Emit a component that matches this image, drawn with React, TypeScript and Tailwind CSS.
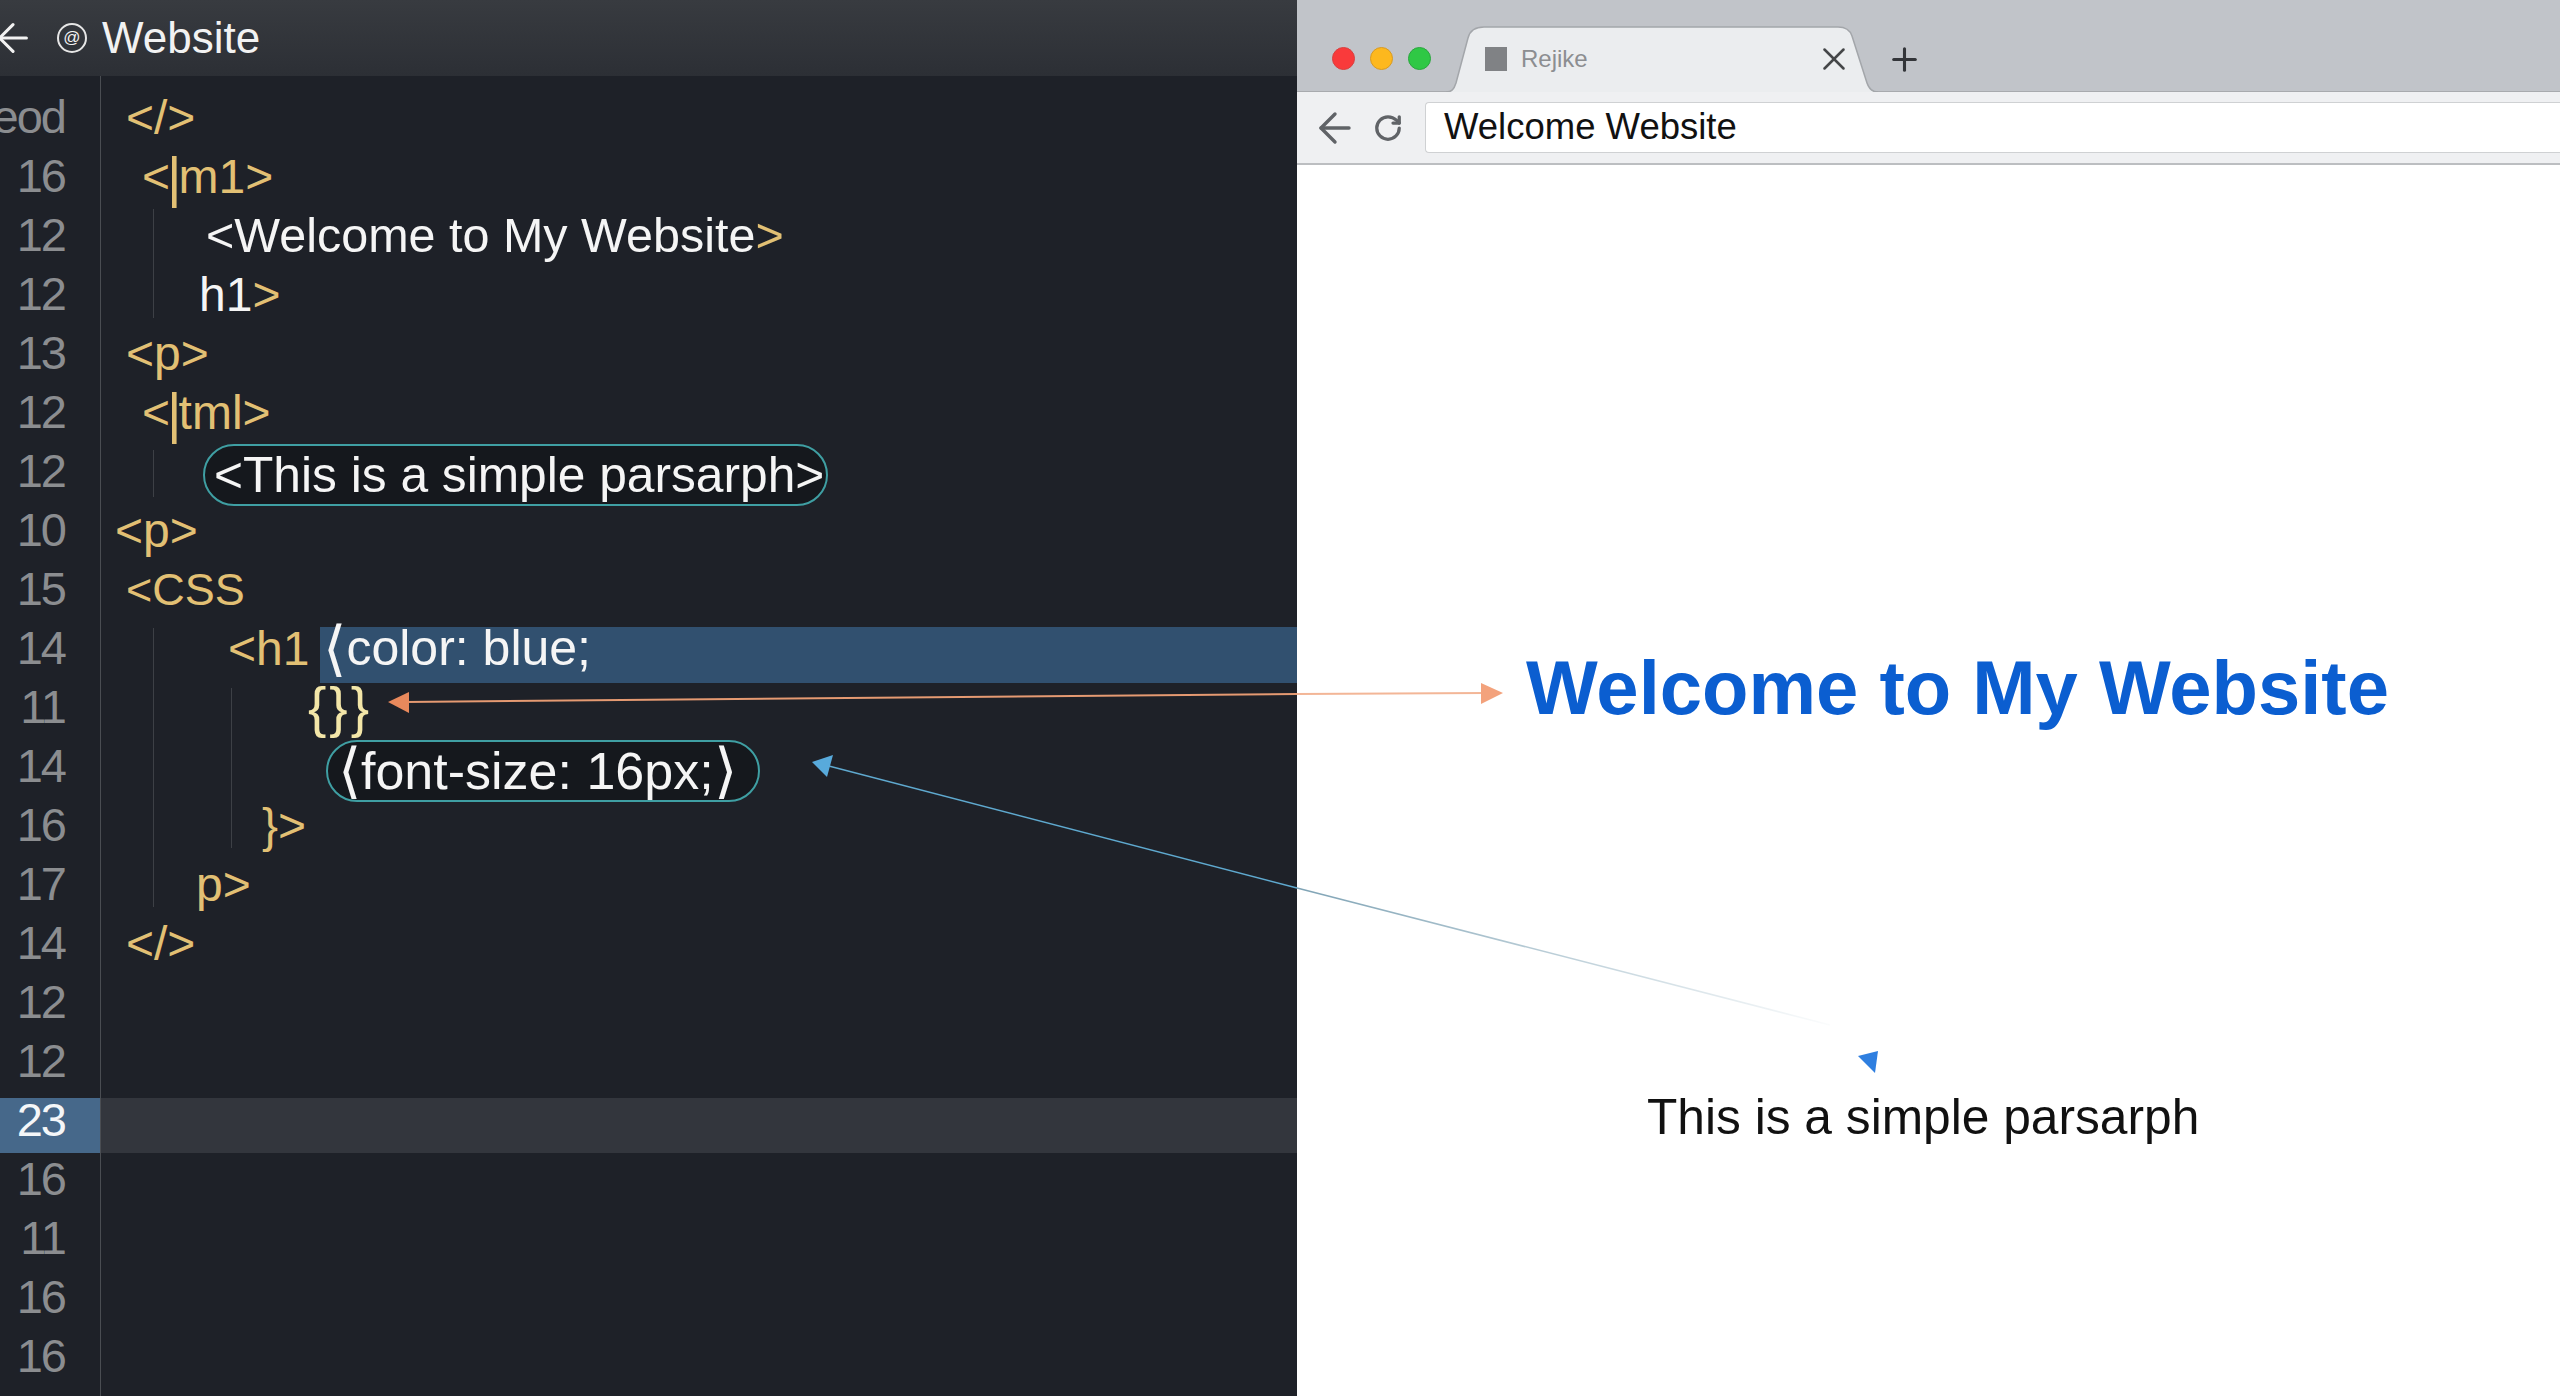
import { ArrowLeft, Plus, RotateCw, X } from 'lucide-react';
import type { ReactNode } from 'react';

const numbers = ['eod', '16', '12', '12', '13', '12', '12', '10', '15', '14', '11', '14', '16', '17', '14', '12', '12', '23', '16', '11', '16', '16'];

const Y = ({ children }: { children: ReactNode }) => <span className="text-[#e2c074]">{children}</span>;

const Pill = ({ className, children }: { className: string; children: ReactNode }) => (
  <div className={`flex h-[62px] items-center whitespace-nowrap rounded-full border-2 border-[#3f9fa3] bg-[#15181d] ${className}`}>{children}</div>
);

// tall bar / chevron glyphs the editor draws bigger than the text around them
const Bar = () => <span className="mx-[-3px] text-[56px] leading-none">|</span>;
const Tall = ({ children }: { children: ReactNode }) => <span className="text-[60px] leading-none">{children}</span>;

function Gutter() {
  return (
    <div className="w-[101px] shrink-0 border-r border-[#4a4d52] pt-[12px] text-[47px] tracking-[-2px] text-[#8b8d90]">
      {numbers.map((n, i) => (
        <div key={i} className="relative flex h-[59px] items-center justify-end whitespace-nowrap pr-[35px]">
          {n === '23' && <div className="absolute left-0 right-0 top-[7px] h-[55px] bg-[#46688a]" />}
          <span className={n === '23' ? 'relative text-[#f4f6f8]' : 'relative'}>{n}</span>
        </div>
      ))}
    </div>
  );
}

function Code() {
  return (
    <div className="relative flex-1 overflow-hidden pt-[12px] text-[48px] text-[#f5f5f5]">
      {/* indent guides */}
      <div className="absolute left-[52px] top-[133px] h-[109px] w-px bg-[#3d4046]" />
      <div className="absolute left-[52px] top-[374px] h-[47px] w-px bg-[#3d4046]" />
      <div className="absolute left-[52px] top-[552px] h-[279px] w-px bg-[#3d4046]" />
      <div className="absolute left-[130px] top-[612px] h-[160px] w-px bg-[#3d4046]" />

      <div className="flex h-[59px] items-center pl-[25px]"><Y>&lt;/&gt;</Y></div>
      <div className="flex h-[59px] items-center pl-[41px] text-[#e2c074]">&lt;<Bar />m1&gt;</div>
      <div className="flex h-[59px] items-center pl-[105px] text-[48.5px]">&lt;Welcome to My Website<Y>&gt;</Y></div>
      <div className="flex h-[59px] items-center pl-[98px]">h1<Y>&gt;</Y></div>
      <div className="flex h-[59px] items-center pl-[25px]"><Y>&lt;p&gt;</Y></div>
      <div className="flex h-[59px] items-center pl-[41px] text-[#e2c074]">&lt;<Bar />tml&gt;</div>
      <div className="flex h-[59px] items-center pl-[102px]">
        <Pill className="mt-[7px] w-[625px] pl-[9px] text-[49.7px]">&lt;This is a simple parsarph&gt;</Pill>
      </div>
      <div className="flex h-[59px] items-center pl-[14px]"><Y>&lt;p&gt;</Y></div>
      <div className="flex h-[59px] items-center pl-[25px] text-[45px]"><Y>&lt;CSS</Y></div>
      <div className="relative flex h-[59px] items-center pl-[127px]">
        <div className="absolute bottom-[-5px] left-[219px] right-0 top-[8px] bg-[#31506f]" />
        <Y>&lt;h1</Y>
        <span className="relative ml-[14px] flex items-center text-[50px]"><Tall>⟨</Tall>color: blue;</span>
      </div>
      <div className="flex h-[59px] items-center pl-[207px] text-[55px] leading-none tracking-[3px] text-[#f3e6a8]">{'{}}'}</div>
      <div className="flex h-[59px] items-center pl-[225px]">
        <Pill className="mt-[8px] w-[434px] pl-[10px] text-[52px]"><Tall>⟨</Tall>font-size: 16px;<Tall>⟩</Tall></Pill>
      </div>
      <div className="flex h-[59px] items-center pl-[161px]"><Y>{'}>'}</Y></div>
      <div className="flex h-[59px] items-center pl-[95px]"><Y>p&gt;</Y></div>
      <div className="flex h-[59px] items-center pl-[25px]"><Y>&lt;/&gt;</Y></div>
      <div className="h-[59px]" />
      <div className="h-[59px]" />
      <div className="relative h-[59px]">
        <div className="absolute left-0 right-0 top-[7px] h-[55px] bg-[#33363d]" />
      </div>
    </div>
  );
}

function Editor() {
  return (
    <div className="flex w-[1297px] shrink-0 flex-col bg-[#1e2128]">
      <div className="flex h-[76px] shrink-0 items-center bg-gradient-to-b from-[#383b40] to-[#2c2f35] text-[44px] text-[#f2f2f2]">
        <ArrowLeft size={46} strokeWidth={1.6} className="ml-[-10px] shrink-0" />
        <div className="ml-[21px] flex h-[30px] w-[30px] items-center justify-center rounded-full border-2 border-[#e6e6e6] text-[17px]">@</div>
        <span className="ml-[15px]">Website</span>
      </div>
      <div className="flex flex-1 overflow-hidden">
        <Gutter />
        <Code />
      </div>
    </div>
  );
}

function Browser() {
  return (
    <div className="flex min-w-0 flex-1 flex-col bg-white">
      <div className="flex h-[92px] shrink-0 items-end border-b border-[#a8aaae] bg-[#c1c4c9]">
        <div className="mb-[21px] ml-[35px] flex gap-[15px]">
          <div className="h-[23px] w-[23px] rounded-full border border-[#d8403f] bg-[#f93a3b]" />
          <div className="h-[23px] w-[23px] rounded-full border border-[#d89a22] bg-[#fdb81e]" />
          <div className="h-[23px] w-[23px] rounded-full border border-[#2aa63e] bg-[#2fc845]" />
        </div>
        <div className="relative mb-[-1px] ml-[15px] flex h-[66px] w-[432px] items-center pl-[39px] pr-[25px]">
          <svg className="absolute inset-0" width="432" height="66" viewBox="0 0 432 66">
            <path d="M0 66 C6 66 8 63 10 57 L22 12 C24 4 29 1 38 1 L392 1 C400 1 404 4 406 10 L421 57 C423 63 426 66 432 66 Z" fill="#ebedef" />
            <path d="M0 66 C6 66 8 63 10 57 L22 12 C24 4 29 1 38 1 L392 1 C400 1 404 4 406 10 L421 57 C423 63 426 66 432 66" fill="none" stroke="#a3a6aa" strokeWidth="1.5" />
          </svg>
          <div className="relative h-[24px] w-[22px] bg-[#808285]" />
          <span className="relative ml-[14px] text-[24px] text-[#8c8e91]">Rejike</span>
          <X size={38} strokeWidth={1.6} className="relative ml-auto text-[#444648]" />
        </div>
        <Plus size={37} strokeWidth={2} className="mb-[13px] ml-[8px] text-[#333539]" />
      </div>
      <div className="flex h-[73px] shrink-0 items-center border-b-2 border-[#bcbec1] bg-[#eff0f2]">
        <ArrowLeft size={48} strokeWidth={1.7} className="ml-[14px] shrink-0 text-[#606367]" />
        <RotateCw size={30} strokeWidth={2.6} className="ml-[14px] shrink-0 text-[#606367]" />
        <div className="ml-[22px] flex h-[51px] flex-1 items-center rounded-l-[4px] border border-r-0 border-[#cfd1d3] bg-white pl-[18px] text-[36.5px] text-[#111111]">
          Welcome Website
        </div>
      </div>
      <div className="flex-1 pt-[478px]">
        <h1 className="ml-[229px] whitespace-nowrap text-[76px] font-bold leading-[90px] text-[#0b5ed0]">Welcome to My Website</h1>
        <p className="ml-[350px] mt-[354px] whitespace-nowrap text-[49.7px] leading-[60px] text-[#111111]">This is a simple parsarph</p>
      </div>
    </div>
  );
}

function Arrows() {
  return (
    <svg className="pointer-events-none absolute inset-0" width="2560" height="1396" viewBox="0 0 2560 1396">
      <defs>
        <linearGradient id="fade" gradientUnits="userSpaceOnUse" x1="1297" y1="888" x2="1830" y2="1025">
          <stop offset="0" stopColor="#7fa3b5" />
          <stop offset="1" stopColor="#7fa3b5" stopOpacity="0.03" />
        </linearGradient>
      </defs>
      <line x1="405" y1="702" x2="1297" y2="694" stroke="#e59a72" strokeWidth="2" />
      <line x1="1297" y1="694" x2="1485" y2="693" stroke="#f3b697" strokeWidth="2" />
      <polygon points="388,702 409,692 409,713" fill="#e8895c" />
      <polygon points="1503,693 1481,683 1481,704" fill="#f3a27c" />
      <line x1="825" y1="765" x2="1297" y2="888" stroke="#5fa9cf" strokeWidth="1.5" />
      <line x1="1297" y1="888" x2="1830" y2="1025" stroke="url(#fade)" strokeWidth="1.5" />
      <polygon points="812,762 833,755 827,777" fill="#58aadb" />
      <polygon points="1858,1056 1878,1051 1875,1073" fill="#2f7fe0" />
    </svg>
  );
}

export default function App() {
  return (
    <div className="relative flex h-[1396px] w-[2560px] overflow-hidden font-['Liberation_Sans',sans-serif]">
      <Editor />
      <Browser />
      <Arrows />
    </div>
  );
}
